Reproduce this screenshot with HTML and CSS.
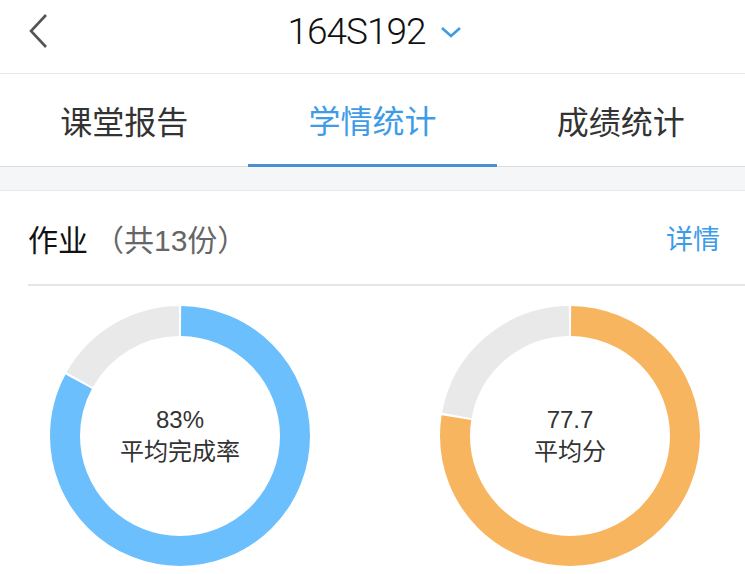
FILE: index.html
```html
<!DOCTYPE html>
<html lang="zh-CN">
<head>
  <meta charset="UTF-8" />
  <meta name="viewport" content="width=device-width, initial-scale=1" />
  <title>学情统计</title>
  <link rel="stylesheet" href="styles.css">
</head>
<body>

  <header class="topbar">
    <button class="back-btn" aria-label="返回">
      <svg width="22" height="36" viewBox="0 0 22 36">
        <polyline points="18,2 3,18 18,34" fill="none" stroke="#555" stroke-width="2.6" />
      </svg>
    </button>
    <div class="class-title">
      <span>164S192</span>
      <svg class="chevron" width="22" height="12" viewBox="0 0 22 12">
        <polyline points="2,2 11,10 20,2" fill="none" stroke="#3d9be9" stroke-width="2.6" />
      </svg>
    </div>
    <div></div>
  </header>

  <nav class="tabs">
    <a class="tab">课堂报告</a>
    <a class="tab active">学情统计</a>
    <a class="tab">成绩统计</a>
  </nav>

  <div class="spacer"></div>

  <section class="card">
    <div class="card-head">
      <span class="card-title">作业</span>
      <span class="card-count">（共13份）</span>
      <a class="card-more">详情</a>
    </div>

    <div class="charts">
      <div class="donut">
        <svg width="260" height="260" viewBox="0 0 260 260">
          <g transform="rotate(-90 130 130)">
            <circle cx="130" cy="130" r="115" fill="none" stroke="#e9e9e9" stroke-width="30"
              pathLength="100" stroke-dasharray="16.7 83.3" stroke-dashoffset="-83.15" />
            <circle cx="130" cy="130" r="115" fill="none" stroke="#6cbffd" stroke-width="30"
              pathLength="100" stroke-dasharray="82.7 17.3" stroke-dashoffset="-0.15" />
          </g>
        </svg>
        <div class="donut-label">
          <div>83%</div>
          <div>平均完成率</div>
        </div>
      </div>

      <div class="donut">
        <svg width="260" height="260" viewBox="0 0 260 260">
          <g transform="rotate(-90 130 130)">
            <circle cx="130" cy="130" r="115" fill="none" stroke="#e9e9e9" stroke-width="30"
              pathLength="100" stroke-dasharray="22 78" stroke-dashoffset="-77.85" />
            <circle cx="130" cy="130" r="115" fill="none" stroke="#f8b55f" stroke-width="30"
              pathLength="100" stroke-dasharray="77.4 22.6" stroke-dashoffset="-0.15" />
          </g>
        </svg>
        <div class="donut-label">
          <div>77.7</div>
          <div>平均分</div>
        </div>
      </div>
    </div>
  </section>

</body>
</html>
```

FILE: styles.css
```css
body {
  margin: 0;
  font-family: "Liberation Sans", "Noto Sans CJK SC", sans-serif;
  background: #fff;
  color: #333;
  overflow: hidden;
}
.topbar {
  height: 62px;
  padding-bottom: 11px;
  display: grid;
  grid-template-columns: 1fr auto 1fr;
  align-items: center;
  border-bottom: 1px solid #e6e6e6;
}
.back-btn {
  justify-self: start;
  margin-left: 28px;
  padding: 0;
  border: none;
  background: none;
  display: flex;
}
.class-title {
  display: flex;
  align-items: center;
  gap: 14px;
  font-family: Roboto, "Liberation Sans", sans-serif;
  font-weight: 300;
  font-size: 37px;
  letter-spacing: -1px;
  color: #111;
  margin-left: 4px;
}
.chevron {
  margin-top: 2px;
}
.tabs {
  height: 92px;
  display: grid;
  grid-template-columns: repeat(3, 1fr);
  border-bottom: 1px solid #dcdcdc;
}
.tab {
  display: flex;
  align-items: center;
  justify-content: center;
  font-size: 32px;
  color: #333;
}
.tab.active {
  color: #3d9be9;
  border-bottom: 3px solid #4a90d0;
  margin-bottom: -1px;
}
.spacer {
  height: 23px;
  background: #f5f6f8;
  border-bottom: 1px solid #e8e8e8;
}
.card-head {
  height: 93px;
  display: flex;
  align-items: center;
  margin-left: 28px;
  padding-right: 25px;
  border-bottom: 2px solid #e6e6e6;
}
.card-title {
  font-size: 30px;
  color: #111;
}
.card-count {
  font-size: 30px;
  color: #666;
  margin-left: 6px;
}
.card-more {
  margin-left: auto;
  font-size: 27px;
  color: #3d9be9;
}
.charts {
  display: flex;
  gap: 130px;
  padding: 20px 0 0 50px;
}
.donut {
  display: grid;
  place-items: center;
  width: 260px;
  height: 260px;
}
.donut svg,
.donut-label {
  grid-area: 1 / 1;
}
.donut-label {
  text-align: center;
  font-size: 24px;
  line-height: 32px;
  color: #333;
}
```
